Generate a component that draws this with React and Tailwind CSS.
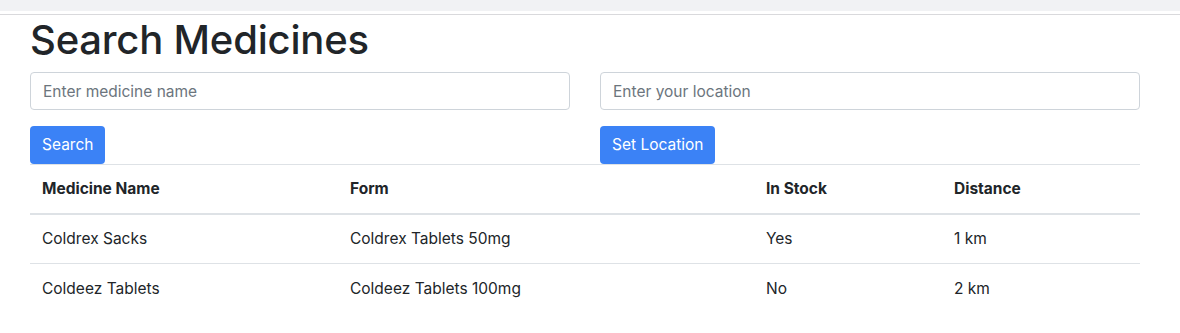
import React from 'react';

const rows = [
  { name: 'Coldrex Sacks', form: 'Coldrex Tablets 50mg', stock: 'Yes', distance: '1 km' },
  { name: 'Coldeez Tablets', form: 'Coldeez Tablets 100mg', stock: 'No', distance: '2 km' },
];

export default function App() {
  return (
    <div className="min-h-[333px] bg-white text-[#212529] font-['Inter',sans-serif]">
      <div className="h-[11px] bg-[#f1f2f4]" />
      <div className="h-[3px]" />
      <div className="h-px bg-[#d9d9dc]" />

      <div className="ml-[30px] w-[1110px]">
        <h1 className="mt-[1px] text-[40px] leading-[48px] font-medium tracking-[-0.2px]">Search Medicines</h1>

        <div className="mt-[8px] grid grid-cols-2 gap-[30px]">
          <div>
            <input
              type="text"
              placeholder="Enter medicine name"
              className="block w-full h-[38px] px-3 border border-[#ced4da] rounded-[4px] text-[15.5px] placeholder:text-[#6c757d] outline-none"
            />
            <button className="mt-[16px] h-[38px] px-3 rounded-[4px] bg-[#3b82f6] text-white text-[15.5px]">
              Search
            </button>
          </div>
          <div>
            <input
              type="text"
              placeholder="Enter your location"
              className="block w-full h-[38px] px-3 border border-[#ced4da] rounded-[4px] text-[15.5px] placeholder:text-[#6c757d] outline-none"
            />
            <button className="mt-[16px] h-[38px] px-3 rounded-[4px] bg-[#3b82f6] text-white text-[15.5px]">
              Set Location
            </button>
          </div>
        </div>

        <table className="w-full border-collapse text-[15.5px]">
          <thead>
            <tr className="border-t border-[#dee2e6]">
              <th className="w-[308px] h-[49px] px-3 text-left font-bold border-b-2 border-[#dee2e6]">Medicine Name</th>
              <th className="w-[416px] px-3 text-left font-bold border-b-2 border-[#dee2e6]">Form</th>
              <th className="w-[188px] px-3 text-left font-bold border-b-2 border-[#dee2e6]">In Stock</th>
              <th className="px-3 text-left font-bold border-b-2 border-[#dee2e6]">Distance</th>
            </tr>
          </thead>
          <tbody>
            {rows.map((r, i) => (
              <tr key={r.name} className={i > 0 ? 'border-t border-[#dee2e6]' : ''}>
                <td className="h-[50px] px-3">{r.name}</td>
                <td className="px-3">{r.form}</td>
                <td className="px-3">{r.stock}</td>
                <td className="px-3">{r.distance}</td>
              </tr>
            ))}
          </tbody>
        </table>
      </div>
    </div>
  );
}
